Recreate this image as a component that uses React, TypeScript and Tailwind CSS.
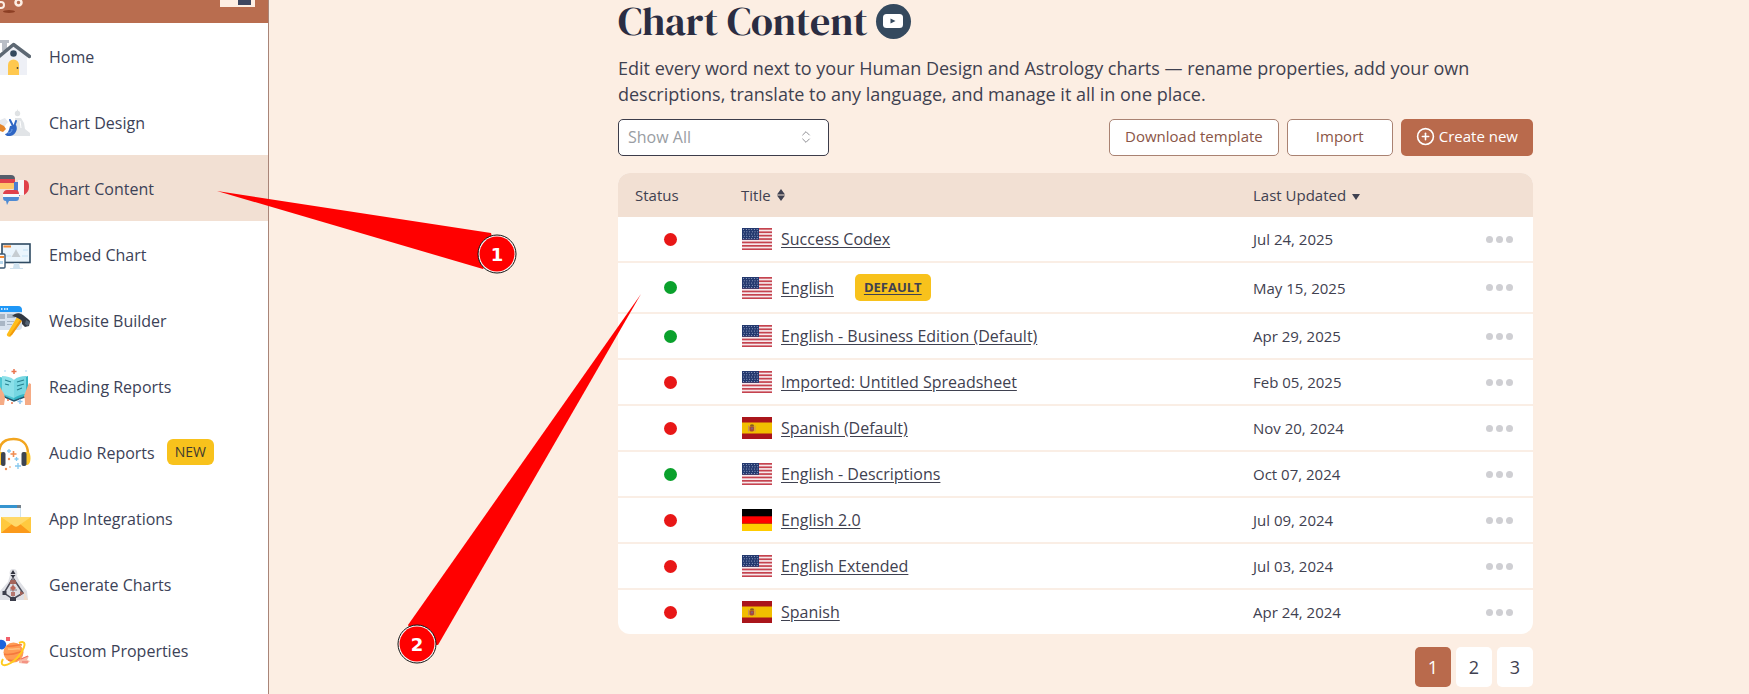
import { ReactNode, useState } from 'react';
import { ChevronsUpDown, CirclePlus } from 'lucide-react';

type FlagCode = 'us' | 'es' | 'de';

interface ContentRow {
  title: string;
  flag: FlagCode;
  active: boolean;
  updated: string;
  isDefault?: boolean;
}

const ROWS: ContentRow[] = [
  { title: 'Success Codex', flag: 'us', active: false, updated: 'Jul 24, 2025' },
  { title: 'English', flag: 'us', active: true, updated: 'May 15, 2025', isDefault: true },
  { title: 'English - Business Edition (Default)', flag: 'us', active: true, updated: 'Apr 29, 2025' },
  { title: 'Imported: Untitled Spreadsheet', flag: 'us', active: false, updated: 'Feb 05, 2025' },
  { title: 'Spanish (Default)', flag: 'es', active: false, updated: 'Nov 20, 2024' },
  { title: 'English - Descriptions', flag: 'us', active: true, updated: 'Oct 07, 2024' },
  { title: 'English 2.0', flag: 'de', active: false, updated: 'Jul 09, 2024' },
  { title: 'English Extended', flag: 'us', active: false, updated: 'Jul 03, 2024' },
  { title: 'Spanish', flag: 'es', active: false, updated: 'Apr 24, 2024' },
];

/* Sidebar icons, all drawn on a 31x36 board */

const HomeIcon = (
  <>
    <path d="M0 2h9v3H7v8H2V5H0z" fill="#b9bec6" />
    <path d="M0 17 13.500 7 27 17v20H0z" fill="#eef0f6" />
    <path d="M-2 19.500 13.500 6.500 29.500 18.500" fill="none" stroke="#5d6873" strokeWidth="3.500" strokeLinejoin="round" strokeLinecap="round" />
    <circle cx="13.500" cy="15.500" r="3.300" fill="#34495e" />
    <path d="M8 37V27a5.500 5.500 0 0 1 11 0v10z" fill="#ffc84f" />
    <circle cx="17.500" cy="30" r="0.900" fill="#4d4334" />
  </>
);

const DesignIcon = (
  <>
    <path d="M0 16 5 14l3 4-4 5H0z" fill="#e6e9ee" />
    <path d="M0 20l4 2 2 3-3 3-3-1z" fill="#e5862b" />
    <circle cx="17.500" cy="9.500" r="2.700" fill="#dfe2e4" />
    <path d="M17.500 5l1 3h-2z" fill="#dfe2e4" />
    <path d="M15 14h6l3 5 1 6 5 4v3H10l2-5 3-3z" fill="#e1e4e7" />
    <path d="M20 17l1 7" stroke="#fff" />
    <path d="M10 16l3 6M16 17l-2 6" stroke="#2f66c4" strokeWidth="2" strokeLinecap="round" />
    <path d="M10 22l6-1c2 4 0 8-3 10-3 2-8 1-8-1 3 0 4-4 5-8z" fill="#2f66c4" />
    <path d="M8 29c3 0 4-2 4-4" fill="none" stroke="#6fa3e8" />
  </>
);

const ContentIcon = (
  <>
    <path d="M0 5h11a4 4 0 0 1 4 4v3H0z" fill="#565e6b" />
    <path d="M0 9h15v5H0z" fill="#e0414b" />
    <path d="M0 13h15v3a3 3 0 0 1-3 3H0z" fill="#ffc66a" />
    <path d="M14 12h6v14c-4-1-7-4-6-8z" fill="#4a7fd4" />
    <path d="M18 10h6v15h-6z" fill="#f6f6f8" />
    <path d="M24 10c4 0 5 3 5 7s-2 6-5 8z" fill="#e0414b" />
    <path d="M7 20h9c2 0 3 2 3 4H3c0-2 2-4 4-4z" fill="#e0414b" />
    <path d="M3 24h16v3H3z" fill="#f8f8fa" />
    <path d="M3 27h16c0 3-1 4-3 4H9l-2 4-1-4c-2 0-3-1-3-4z" fill="#4f8bd3" />
  </>
);

const EmbedIcon = (
  <>
    <rect x="2" y="8" width="28" height="18.500" fill="#eaf5fd" stroke="#2e4a62" strokeWidth="1.600" />
    <rect x="3.500" y="9.500" width="7.500" height="2" fill="#f58a33" />
    <path d="M16 13l1.500 3 3 5h-9l3-5z" fill="#c6cdd2" />
    <path d="M6 20h5M23 14h5M22 20h6" stroke="#c2e1f5" />
    <path d="M14 27h5l1 5h3v1H10v-1h3z" fill="#cfe2ef" />
    <rect x="-3" y="18" width="8" height="14" rx="1" fill="#fff" stroke="#3b5873" strokeWidth="1.400" />
    <path d="M0 20h4v2H0z" fill="#f58a33" />
    <path d="M0 25h3v3H0z" fill="#b8d8ee" />
  </>
);

const BuilderIcon = (
  <>
    <path d="M0 4h18c3 0 4 2 4 4v16c0 3-1 4-4 4H0z" fill="#d8e2ee" />
    <path d="M0 4h18c3 0 4 2 4 4v2H0z" fill="#1e97f7" />
    <path d="M1 7h1.500M4 7h1.500M6.500 7H8" stroke="#fff" strokeWidth="1.600" />
    <path d="M0 12h5v5H0zM7 12h8v4H7zM0 19h5v5H0zM7 19h7v1H7zM7 22h5v1H7z" fill="#a9b6c5" />
    <path d="M17 15l5 3L11 34c-1 2-5 0-4-2z" fill="#ffbd1a" />
    <path d="M20 18l2 1-10 14-3 1z" fill="#f29a0c" />
    <path d="M12 14c3-3 7-4 11-1l5 4 2 2-1 5-4 1-3-3v-3c-2-2-5-4-10-5z" fill="#323943" />
    <path d="M26 18l4 2-2 4-3-2z" fill="#546374" />
  </>
);

const ReadingIcon = (
  <>
    <path d="M0 9l14 3v21L0 28z" fill="#4cc5d2" />
    <path d="M14 12l14-4v20l-14 5z" fill="#35b4c4" />
    <path d="M2 8c5 0 9 1 12 4v18C10 28 6 27 2 26z" fill="#8be0e9" />
    <path d="M14 12c3-3 7-4 12-4v18c-4 0-9 2-12 4z" fill="#76d7e2" />
    <path d="M0 27l14 6 13-5" fill="none" stroke="#24566d" strokeWidth="1.500" />
    <path d="M5 12l6 2M5 16l4 1M17 14l7-2M17 18l7-2M17 22l5-2" stroke="#26808f" strokeWidth="1.200" />
    <path d="M0 19l4 7 1 4-1 7H0zM31 16v21h-6c0-4 0-6-1-9l3-8 2-5z" fill="#f5ab85" />
    <path d="M14 1v5M11.500 3.500h5" stroke="#e9744d" strokeWidth="1.500" />
    <path d="M20 31v5M17.500 33.500h5" stroke="#8cc6ef" strokeWidth="1.500" />
    <circle cx="8" cy="32" r="1" fill="#e9744d" />
    <circle cx="12" cy="35" r="1" fill="#e9744d" />
    <circle cx="5" cy="3" r="0.700" fill="#8cc6ef" />
    <circle cx="26" cy="3" r="0.700" fill="#8cc6ef" />
  </>
);

const AudioIcon = (
  <>
    <path d="M-1 20C-1 9 5 5 13.500 5S28 10 28 20" fill="none" stroke="#f2a51f" strokeWidth="2.500" />
    <path d="M24 18h4c3 0 4 12-1 13h-3z" fill="#ffc629" />
    <path d="M-1 18h3v13h-3z" fill="#ffc629" />
    <rect x="1" y="18" width="4.500" height="14" rx="2" fill="#3d4552" />
    <rect x="21.500" y="18" width="5" height="14" rx="2" fill="#3d4552" />
    <path d="M13.500 17v6M10.500 20h6" stroke="#ef8b50" strokeWidth="1.600" />
    <path d="M9 15v4M7 17h4M18 29v6M15 32h6M16.500 23v4M14.500 25h4" stroke="#86c8ee" strokeWidth="1.300" />
    <circle cx="6" cy="35" r="1.200" fill="#ef8b50" />
    <circle cx="10" cy="33" r="0.800" fill="#ef8b50" />
    <circle cx="9" cy="25" r="1.200" fill="#ef8b50" />
  </>
);

const IntegrationsIcon = (
  <>
    <path d="M0 5h21v3H0z" fill="#3594cf" />
    <path d="M17 5h4v3h-4z" fill="#75818b" />
    <path d="M0 8h20v9H0z" fill="#f5fafd" />
    <path d="M20.500 8v10" stroke="#cfe3ef" />
    <path d="M1 17h30v16H1z" fill="#ffc93f" />
    <path d="M1 33l11-9h8l11 9z" fill="#fb9a1b" />
    <path d="M1 17h30L18 26c-1 1-3 1-4 0z" fill="#ffd969" />
  </>
);

const GenerateIcon = (
  <>
    <path d="M13 3c4 0 5 3 4 7l3 6 7 9 1 9H0V25l8-9 2-7c-1-3 0-6 3-6z" fill="#dfe0e5" />
    <path d="M13 12L4 27l9 6 10-6z" fill="none" stroke="#4a4b58" strokeWidth="1.500" />
    <path d="M13 12v22M10 24h7" stroke="#a09ba2" strokeWidth="1.300" />
    <path d="M13 4l2.500 4h-5zM10.500 9h5L13 12z" fill="#30323e" />
    <path d="M10.500 14h5l1 4h-7z" fill="#a5645a" />
    <path d="M13 19l3 3-3 3-3-3z" fill="#b9675a" />
    <path d="M11 26h4v4h-4z" fill="#b5776f" />
    <path d="M2.500 25h4v4h-4z" fill="#3c3e4b" />
    <path d="M20 25l4 2-4 3z" fill="#a5645a" />
    <path d="M10 31h6v4h-6z" fill="#3c3e4b" />
    <path d="M24 26l4 8h-4z" fill="#f1ddcc" />
  </>
);

const PropertiesIcon = (
  <>
    <path d="M0 8c4-1 7 3 6 6-1 3-4 4-6 3z" fill="#1c62dc" />
    <path d="M6 5h4v4H6z" fill="#f2606b" />
    <path d="M19 27l10-3-2 4 3 1-3 3-8-1z" fill="#f8b9a5" />
    <path d="M21 27l7-3M22 30l6 0" stroke="#ee6f64" strokeWidth="1.200" />
    <circle cx="13.500" cy="20.500" r="10" fill="#ff9c55" />
    <path d="M7 14c6 1 11-2 15-1M4 22c7 2 13-1 19-3M8 28c5 1 9 0 12-2" fill="none" stroke="#f5793d" strokeWidth="1.500" />
    <path d="M8 17c4 1 9-1 12 0" fill="none" stroke="#ffc07f" strokeWidth="1.500" />
    <path d="M19 11c7-3 7 2 2 10S5 36 2 32c-1-2 0-3 1-5" fill="none" stroke="#ffcb1f" strokeWidth="2" />
  </>
);

const NAV_ITEMS: { label: string; icon: ReactNode; badge?: string }[] = [
  { label: 'Home', icon: HomeIcon },
  { label: 'Chart Design', icon: DesignIcon },
  { label: 'Chart Content', icon: ContentIcon },
  { label: 'Embed Chart', icon: EmbedIcon },
  { label: 'Website Builder', icon: BuilderIcon },
  { label: 'Reading Reports', icon: ReadingIcon },
  { label: 'Audio Reports', icon: AudioIcon, badge: 'NEW' },
  { label: 'App Integrations', icon: IntegrationsIcon },
  { label: 'Generate Charts', icon: GenerateIcon },
  { label: 'Custom Properties', icon: PropertiesIcon },
];

const STAR_ROWS = [0, 1, 2, 3, 4];
const STAR_COLS = [0, 1, 2, 3, 4, 5];

function Flag({ code }: { code: FlagCode }) {
  return (
    <svg viewBox="0 0 30 22" className="h-[22px] w-[30px] shrink-0" aria-hidden="true">
      {code === 'us' && (
        <>
          <rect width="30" height="22" fill="#f6e9ec" />
          {[0, 1, 2, 3, 4, 5, 6].map((i) => (
            <rect key={i} y={i * 3.4} width="30" height="1.700" fill="#c5434f" />
          ))}
          <rect width="17" height="11.800" fill="#23386e" />
          {STAR_ROWS.map((r) =>
            STAR_COLS.map((c) => (
              <circle key={`${r}-${c}`} cx={1.6 + c * 2.7 + (r % 2) * 0.6} cy={1.6 + r * 2.2} r="0.500" fill="#b9c4de" />
            ))
          )}
        </>
      )}
      {code === 'es' && (
        <>
          <rect width="30" height="22" fill="#aa151b" />
          <rect y="5.500" width="30" height="11" fill="#f1bf00" />
          <path d="M6 8.500h1v6H6zM12.500 8.500h1v6h-1z" fill="#c9935a" />
          <path d="M7.500 9.500h4.500v3.500c0 2-4.500 2-4.500 0z" fill="#a8483a" />
          <path d="M8 8c1-1 3-1 4 0l-.5 1.500h-3z" fill="#8a5a20" />
          <circle cx="10" cy="11.500" r="0.900" fill="#7a6a8c" />
        </>
      )}
      {code === 'de' && (
        <>
          <rect width="30" height="22" fill="#000" />
          <rect y="7.300" width="30" height="7.400" fill="#f00" />
          <rect y="14.700" width="30" height="7.300" fill="#fc0" />
        </>
      )}
    </svg>
  );
}

function Sidebar() {
  return (
    <aside className="w-[269px] shrink-0 border-r border-[#a98578] bg-white">
      <div className="flex h-[23px] items-start justify-between bg-[#b96d4f] pr-[13px]">
        <svg viewBox="0 0 24 14" className="h-[14px] w-6" aria-hidden="true">
          <ellipse cx="9" cy="11.500" rx="6" ry="1.500" fill="#8c3f24" />
          <circle cx="1" cy="5" r="3" fill="none" stroke="#fdeee3" strokeWidth="2" />
          <circle cx="18.500" cy="2.500" r="3" fill="none" stroke="#fdeee3" strokeWidth="2.500" />
        </svg>
        <button type="button" aria-label="Collapse menu" className="flex h-[7px] w-[35px] justify-end bg-[#fdeee3] pr-1">
          <span className="h-[5px] w-[13px] bg-[#3d4660]" />
        </button>
      </div>
      <nav>
        {NAV_ITEMS.map((item) => {
          const isActive = item.label === 'Chart Content';
          return (
            <a
              key={item.label}
              href="#"
              aria-current={isActive ? 'page' : undefined}
              className={`flex h-[66px] items-center text-base text-[#3c4257] ${isActive ? 'bg-[#f2e0d3]' : ''}`}
            >
              <svg viewBox="0 0 31 36" className="h-9 w-[31px] shrink-0 overflow-visible [clip-path:inset(-4px_0)]" aria-hidden="true">
                {item.icon}
              </svg>
              <span className="ml-[18px] pt-0.5">{item.label}</span>
              {item.badge && (
                <span className="ml-3 flex h-[26px] items-center rounded-md bg-[#f8c21c] px-2 text-sm text-[#3f3a30]">
                  {item.badge}
                </span>
              )}
            </a>
          );
        })}
      </nav>
    </aside>
  );
}

function Callouts() {
  return (
    <svg className="pointer-events-none absolute top-0 left-0 h-[694px] w-[700px]" viewBox="0 0 700 694" aria-hidden="true">
      <path d="M217 191 491 233 496 254 483 269z" fill="#f00" />
      <path d="M641 294 408 625 417 644 438 645z" fill="#f00" />
      {[
        { n: 1, x: 497, y: 254 },
        { n: 2, x: 417, y: 644 },
      ].map(({ n, x, y }) => (
        <g key={n}>
          <circle cx={x} cy={y} r="19" fill="#fff" stroke="#111" />
          <circle cx={x} cy={y} r="17.500" fill="#f00" />
          <text x={x} y={y + 7} textAnchor="middle" fill="#fff" className="font-['DejaVu_Sans'] text-lg font-bold">
            {n}
          </text>
        </g>
      ))}
    </svg>
  );
}

export default function App() {
  const [page, setPage] = useState(1);

  return (
    <div className="relative flex min-h-screen bg-[#fceee3] font-['Open_Sans','Noto_Sans',sans-serif] text-[#3f4150]">
      <Sidebar />

      <main className="min-w-0 flex-1 pr-[216px] pl-[349px]">
        <div className="flex h-[42px] items-center gap-2">
          <h1 className="font-['DM_Serif_Display','Liberation_Serif',serif] text-[40px] leading-10 font-normal text-[#2b2d42]">
            Chart Content
          </h1>
          <button type="button" aria-label="Watch tutorial" className="flex size-[35px] items-center justify-center rounded-full bg-[#34495e]">
            <svg viewBox="0 0 20 14" className="h-3.5 w-5" aria-hidden="true">
              <rect width="20" height="14" rx="3.500" fill="#fff" />
              <path d="M7.500 4.500v5l5-2.500z" fill="#34495e" />
            </svg>
          </button>
        </div>

        <p className="mt-[13px] text-lg leading-[26px]">
          Edit every word next to your Human Design and Astrology charts — rename properties, add your own descriptions,
          translate to any language, and manage it all in one place.
        </p>

        {/* Toolbar */}
        <div className="mt-3 flex items-center justify-between">
          <div className="relative">
            <select
              aria-label="Filter content"
              className="h-[37px] w-[211px] appearance-none rounded-[5px] border border-[#3c3c4a] bg-white pr-8 pb-0.5 pl-[9px] text-base text-[#999da3]"
            >
              <option>Show All</option>
              <option>Active</option>
              <option>Inactive</option>
            </select>
            <ChevronsUpDown className="pointer-events-none absolute top-[10px] right-[15px] size-4 text-[#8f8f94]" strokeWidth={1.5} />
          </div>
          <div className="flex gap-2 text-[15px] text-[#8a5546]">
            <button type="button" className="h-[37px] rounded-[5px] border border-[#a98272] bg-white px-[15px] pb-0.5">
              Download template
            </button>
            <button type="button" className="h-[37px] w-[106px] rounded-[5px] border border-[#a98272] bg-white pb-0.5">
              Import
            </button>
            <button type="button" className="flex h-[37px] items-center gap-1 rounded-[5px] bg-[#b96a4c] px-[15px] pb-0.5 text-white">
              <CirclePlus className="size-[19px]" strokeWidth={2} />
              Create new
            </button>
          </div>
        </div>

        {/* Content table */}
        <div className="mt-[17px] overflow-hidden rounded-xl bg-white">
          <table className="w-full table-fixed border-separate border-spacing-0 text-left text-[15px]">
            <thead>
              <tr className="h-11 bg-[#f2e0d3]">
                <th className="w-[105px] pl-[17px] font-normal">Status</th>
                <th className="pl-[18px] font-normal">
                  <button type="button" className="flex items-center gap-1.5">
                    Title
                    <svg viewBox="0 0 8 12" className="h-3 w-2" aria-hidden="true">
                      <path d="M4 0l4 5.400H0zM4 12L0 6.600h8z" fill="#3f4150" />
                    </svg>
                  </button>
                </th>
                <th className="w-[280px] font-normal">
                  <button type="button" className="flex items-center gap-1.5">
                    Last Updated
                    <svg viewBox="0 0 8 6" className="mt-1 h-1.5 w-2" aria-hidden="true">
                      <path d="M0 0h8L4 6z" fill="#3f4150" />
                    </svg>
                  </button>
                </th>
              </tr>
            </thead>
            <tbody className="[&>tr:last-child>td]:border-b-0">
              {ROWS.map((row) => (
                <tr key={row.title}>
                  <td className="border-b-2 border-[#faeee5] pl-[46px]">
                    <span
                      role="img"
                      aria-label={row.active ? 'Active' : 'Inactive'}
                      className={`block size-[13px] rounded-full ${row.active ? 'bg-[#0aa12c]' : 'bg-[#e81717]'}`}
                    />
                  </td>
                  <td className="border-b-2 border-[#faeee5] py-[11px] pl-[19px]">
                    <div className="flex items-center">
                      <Flag code={row.flag} />
                      <a href="#" className="ml-[9px] text-base leading-[22px] underline underline-offset-2">
                        {row.title}
                      </a>
                      {row.isDefault && (
                        <a href="#" className="ml-[21px] flex h-[27px] items-center rounded-[5px] bg-[#f8c21c] px-[9px] text-[13px] font-bold underline underline-offset-2">
                          DEFAULT
                        </a>
                      )}
                    </div>
                  </td>
                  <td className="border-b-2 border-[#faeee5]">
                    <div className="flex items-center justify-between pr-5">
                      <span className="leading-[22px]">{row.updated}</span>
                      <button type="button" aria-label={`Actions for ${row.title}`} className="flex gap-[3px]">
                        <span className="size-[7px] rounded-full bg-[#cfcfd3]" />
                        <span className="size-[7px] rounded-full bg-[#cfcfd3]" />
                        <span className="size-[7px] rounded-full bg-[#cfcfd3]" />
                      </button>
                    </div>
                  </td>
                </tr>
              ))}
            </tbody>
          </table>
        </div>

        {/* Pagination */}
        <div className="mt-[13px] flex justify-end gap-[5px] text-lg">
          {[1, 2, 3].map((n) => (
            <button
              key={n}
              type="button"
              onClick={() => setPage(n)}
              className={`h-10 w-9 rounded-[5px] ${n === page ? 'bg-[#b96a4c] text-white' : 'bg-white'}`}
            >
              {n}
            </button>
          ))}
        </div>
      </main>

      <Callouts />
    </div>
  );
}
